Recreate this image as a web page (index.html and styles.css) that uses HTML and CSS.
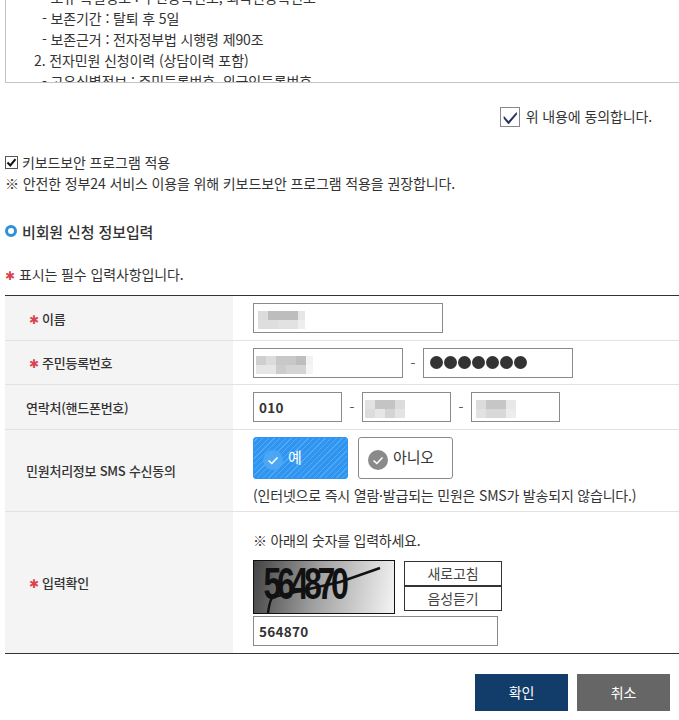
FILE: index.html
```html
<!DOCTYPE html>
<html lang="ko">
<head>
    <meta charset="UTF-8">
    <meta name="viewport" content="width=device-width, initial-scale=1.0">
    <title>비회원 신청 정보입력</title>
    <link rel="stylesheet" href="styles.css">
</head>
<body>
    <div class="terms-box">
        <div class="terms-inner">
            <p class="sub">- 보유 특별정보 : 주민등록번호, 외국인등록번호</p>
            <p class="sub">- 보존기간 : 탈퇴 후 5일</p>
            <p class="sub">- 보존근거 : 전자정부법 시행령 제90조</p>
            <p class="item">2. 전자민원 신청이력 (상담이력 포함)</p>
            <p class="sub">- 고유식별정보 : 주민등록번호, 외국인등록번호</p>
        </div>
    </div>

    <div class="agree">
        <span class="agree-check">
            <svg width="20" height="20" viewBox="0 0 20 20"><path d="M4 9.5 L8.5 14.5 L16.5 5.5 L16.5 7.5 L8.5 17 L4 11.5 Z" fill="#22265c" stroke="#22265c" stroke-width="0.6"/></svg>
        </span>
        <span class="agree-text">위 내용에 동의합니다.</span>
    </div>

    <div class="keyboard">
        <span class="kb-check">
            <svg width="13" height="13" viewBox="0 0 13 13"><path d="M2.5 6.5 L5.3 9.5 L10.5 3.2" fill="none" stroke="#111" stroke-width="2"/></svg>
        </span>
        <span>키보드보안 프로그램 적용</span>
    </div>
    <p class="notice">※ 안전한 정부24 서비스 이용을 위해 키보드보안 프로그램 적용을 권장합니다.</p>

    <h3 class="section-title"><span class="ring"></span>비회원 신청 정보입력</h3>

    <p class="required-note"><span class="star">✱</span>표시는 필수 입력사항입니다.</p>

    <table class="form-table">
        <tr class="row-name">
            <th><span class="star">✱</span>이름</th>
            <td>
                <div class="field w190">
                    <svg class="mosaic" width="50" height="18" viewBox="0 0 50 20" preserveAspectRatio="none">
                        <rect x="0" y="0" width="10" height="10" fill="#dcdcdc"/><rect x="10" y="0" width="30" height="10" fill="#bdbdbd"/><rect x="40" y="0" width="7" height="10" fill="#e6e6e6"/>
                        <rect x="0" y="10" width="20" height="10" fill="#dedede"/><rect x="20" y="10" width="20" height="10" fill="#e2e2e2"/><rect x="40" y="10" width="7" height="10" fill="#eeeeee"/>
                    </svg>
                </div>
            </td>
        </tr>
        <tr class="row-id">
            <th><span class="star">✱</span>주민등록번호</th>
            <td>
                <div class="field-row">
                    <div class="field w150 tight">
                        <svg class="mosaic" width="57" height="18" viewBox="0 0 57 20" preserveAspectRatio="none">
                            <rect x="0" y="0" width="10" height="10" fill="#cfcfcf"/><rect x="10" y="0" width="10" height="10" fill="#dcdcdc"/><rect x="20" y="0" width="20" height="10" fill="#c8c8c8"/><rect x="40" y="0" width="10" height="10" fill="#bebebe"/><rect x="50" y="0" width="7" height="10" fill="#f2f2f2"/>
                            <rect x="0" y="10" width="20" height="10" fill="#e6e6e6"/><rect x="20" y="10" width="10" height="10" fill="#cccccc"/><rect x="30" y="10" width="20" height="10" fill="#d4d4d4"/><rect x="50" y="10" width="7" height="10" fill="#f5f5f5"/>
                        </svg>
                    </div>
                    <span class="dash">-</span>
                    <div class="field w150 dots"><i></i><i></i><i></i><i></i><i></i><i></i><i></i></div>
                </div>
            </td>
        </tr>
        <tr class="row-phone">
            <th class="plain">연락처(핸드폰번호)</th>
            <td>
                <div class="field-row">
                    <div class="field w89 value">010</div>
                    <span class="dash">-</span>
                    <div class="field w89 tight">
                        <svg class="mosaic" width="40" height="18" viewBox="0 0 40 20" preserveAspectRatio="none">
                            <rect x="0" y="0" width="10" height="10" fill="#e2e2e2"/><rect x="10" y="0" width="20" height="10" fill="#c4c4c4"/><rect x="30" y="0" width="10" height="10" fill="#dcdcdc"/>
                            <rect x="0" y="10" width="10" height="10" fill="#dcdcdc"/><rect x="10" y="10" width="10" height="10" fill="#e6e6e6"/><rect x="20" y="10" width="10" height="10" fill="#d4d4d4"/><rect x="30" y="10" width="10" height="10" fill="#e4e4e4"/>
                        </svg>
                    </div>
                    <span class="dash">-</span>
                    <div class="field w89">
                        <svg class="mosaic" width="40" height="18" viewBox="0 0 40 20" preserveAspectRatio="none">
                            <rect x="0" y="0" width="10" height="10" fill="#dcdcdc"/><rect x="10" y="0" width="20" height="10" fill="#c6c6c6"/><rect x="30" y="0" width="10" height="10" fill="#e8e8e8"/>
                            <rect x="0" y="10" width="10" height="10" fill="#e2e2e2"/><rect x="10" y="10" width="20" height="10" fill="#d8d8d8"/><rect x="30" y="10" width="10" height="10" fill="#ececec"/>
                        </svg>
                    </div>
                </div>
            </td>
        </tr>
        <tr class="row-sms">
            <th class="plain">민원처리정보 SMS 수신동의</th>
            <td>
                <div class="choice-row">
                    <div class="choice on">
                        <span class="tick">
                            <svg width="20" height="20" viewBox="0 0 20 20"><path d="M5.5 10.5 L8.8 13.5 L14.5 7.5" fill="none" stroke="#fff" stroke-width="1.6"/></svg>
                        </span>
                        <span>예</span>
                    </div>
                    <div class="choice">
                        <span class="tick">
                            <svg width="20" height="20" viewBox="0 0 20 20"><path d="M5.5 10.5 L8.8 13.5 L14.5 7.5" fill="none" stroke="#fff" stroke-width="1.6"/></svg>
                        </span>
                        <span>아니오</span>
                    </div>
                </div>
                <p class="sms-note">(인터넷으로 즉시 열람·발급되는 민원은 SMS가 발송되지 않습니다.)</p>
            </td>
        </tr>
        <tr class="row-captcha">
            <th><span class="star">✱</span>입력확인</th>
            <td>
                <p class="captcha-help">※ 아래의 숫자를 입력하세요.</p>
                <div class="captcha-row">
                    <div class="captcha-img">
                        <span class="captcha-text">564870</span>
                        <svg class="captcha-line" width="140" height="52" viewBox="0 0 140 52"><path d="M126 7 L86 21 L19 36 C16 38 15 44 14 52" fill="none" stroke="#111" stroke-width="2.4"/></svg>
                    </div>
                    <div class="captcha-btns">
                        <a class="captcha-btn">새로고침</a>
                        <a class="captcha-btn">음성듣기</a>
                    </div>
                </div>
                <div class="field w245 value">564870</div>
            </td>
        </tr>
    </table>

    <div class="action-buttons">
        <a class="btn-ok">확인</a>
        <a class="btn-cancel">취소</a>
    </div>
</body>
</html>
```

FILE: styles.css
```css
* {
    box-sizing: border-box;
}
html, body {
    height: 720px;
    overflow: hidden;
}
body {
    margin: 0;
    padding: 0 9px 0 5px;
    background: #fff;
    color: #333;
    font-family: "Noto Sans CJK KR", "Noto Sans", sans-serif;
    font-size: 14px;
    letter-spacing: -0.12px;
}
p, h3 {
    margin: 0;
}
.terms-box {
    width: 674px;
    height: 83px;
    overflow: hidden;
    border-left: 1px solid #c4c4c4;
    border-bottom: 1px solid #c4c4c4;
}
.terms-inner {
    margin-top: -13px;
    padding-left: 28px;
    line-height: 21px;
}
.terms-inner .sub {
    padding-left: 8px;
}
.agree {
    display: flex;
    align-items: center;
    justify-content: flex-end;
    gap: 6px;
    height: 20px;
    margin: 24px 18px 0 0;
}
.agree-text {
    margin-top: -3px;
}
.agree-check {
    width: 20px;
    height: 20px;
    border: 1px solid #888;
    display: flex;
}
.agree-check svg {
    margin: -1px;
}
.keyboard {
    display: flex;
    align-items: center;
    gap: 4px;
    height: 20px;
    margin-top: 25px;
}
.kb-check {
    width: 13px;
    height: 13px;
    border: 1px solid #555;
    display: flex;
}
.kb-check svg {
    margin: -1px;
}
.notice {
    line-height: 21px;
    margin-top: 1px;
}
.section-title {
    display: flex;
    align-items: center;
    gap: 5px;
    height: 22px;
    margin-top: 26px;
    font-size: 15px;
    font-weight: 500;
}
.ring {
    width: 12px;
    height: 12px;
    border: 3px solid #2f8fd8;
    border-radius: 50%;
}
.required-note {
    margin-top: 21px;
    line-height: 22px;
}
.star {
    display: inline-block;
    width: 10px;
    margin-right: 4px;
    color: #d9434f;
    font-family: "DejaVu Sans", sans-serif;
    font-weight: 400;
    font-size: 12px;
    line-height: 1;
}
.form-table {
    width: 674px;
    margin-top: 10px;
    border-collapse: collapse;
    border-top: 1px solid #333;
    border-bottom: 1px solid #333;
}
.form-table th {
    width: 228px;
    padding: 0 0 0 24px;
    background: #f4f4f4;
    text-align: left;
    font-size: 13px;
    font-weight: 500;
    letter-spacing: -0.25px;
}
.form-table th .star {
    margin-right: 3px;
}
.form-table th.plain {
    padding-left: 21px;
}
.form-table td {
    padding: 0 0 0 20px;
}
.form-table tr + tr {
    border-top: 1px solid #e2e2e2;
}
.row-name { height: 45px; }
.row-id { height: 44px; }
.row-phone { height: 45px; }
.row-sms { height: 82px; }
.row-captcha { height: 142px; }
.row-sms td {
    padding-bottom: 6px;
}
.row-captcha td {
    padding-top: 11px;
}
.field-row {
    display: flex;
    align-items: center;
}
.field {
    height: 30px;
    border: 1px solid #8a8a8a;
    background: #fff;
    display: flex;
    align-items: center;
    padding-left: 4px;
}
.field.tight {
    padding-left: 2px;
}
.mosaic {
    margin-top: 4px;
}
.w190 { width: 190px; }
.w150 { width: 150px; }
.w89 { width: 89px; }
.w245 { width: 245px; }
.value {
    padding-left: 5px;
    font-weight: 700;
    font-size: 13.5px;
    letter-spacing: 0.3px;
    color: #333;
}
.dash {
    width: 20px;
    text-align: center;
    color: #555;
}
.dots {
    gap: 1px;
    padding-left: 6px;
}
.dots i {
    width: 13px;
    height: 13px;
    border-radius: 50%;
    background: #333;
}
.choice-row {
    display: flex;
    gap: 10px;
    margin-top: 6px;
}
.choice {
    width: 95px;
    height: 42px;
    display: flex;
    align-items: center;
    gap: 5px;
    padding-left: 9px;
    border: 1px solid #8a8a8a;
    border-radius: 3px;
    background: #fff;
    font-size: 15px;
}
.choice span:last-child {
    margin-top: -2px;
}
.tick {
    width: 20px;
    height: 20px;
    border-radius: 50%;
    background: #8a8a8a;
    display: flex;
    margin-top: 4px;
}
.choice.on {
    border-color: #2f95f0;
    color: #fff;
    background: repeating-linear-gradient(-45deg, #2f95f0, #2f95f0 3px, #52a9f5 3px, #52a9f5 4px);
}
.choice.on .tick {
    background: #4ba6f4;
}
.sms-note {
    margin-top: 6px;
    line-height: 20px;
    letter-spacing: -0.2px;
}
.captcha-help {
    line-height: 20px;
    margin-bottom: 10px;
    letter-spacing: -0.25px;
}
.captcha-row {
    display: flex;
    align-items: flex-start;
    gap: 9px;
    margin-bottom: 2px;
}
.captcha-img {
    position: relative;
    width: 142px;
    height: 54px;
    overflow: hidden;
    border: 1px solid #111;
    background: linear-gradient(100deg, #444, #a0a0a0 45%, #f4f4f4);
}
.captcha-text {
    display: block;
    padding-left: 13px;
    font-family: "Liberation Sans", sans-serif;
    font-size: 44px;
    font-weight: 700;
    line-height: 46px;
    letter-spacing: -6px;
    color: #111;
    transform: scaleX(0.73);
    transform-origin: left;
}
.captcha-line {
    position: absolute;
    left: 0;
    top: 0;
}
.captcha-btns {
    display: flex;
    flex-direction: column;
    padding-top: 1px;
}
.captcha-btn {
    display: block;
    width: 98px;
    height: 25px;
    border: 1px solid #333;
    text-align: center;
    line-height: 23px;
    color: #444;
}
.action-buttons {
    display: flex;
    justify-content: flex-end;
    gap: 9px;
    margin: 20px 0 0;
}
.action-buttons a {
    display: block;
    width: 93px;
    height: 37px;
    text-align: center;
    line-height: 37px;
    color: #fff;
    font-size: 14px;
}
.btn-ok {
    background: #123c69;
}
.btn-cancel {
    background: #666;
}
```
